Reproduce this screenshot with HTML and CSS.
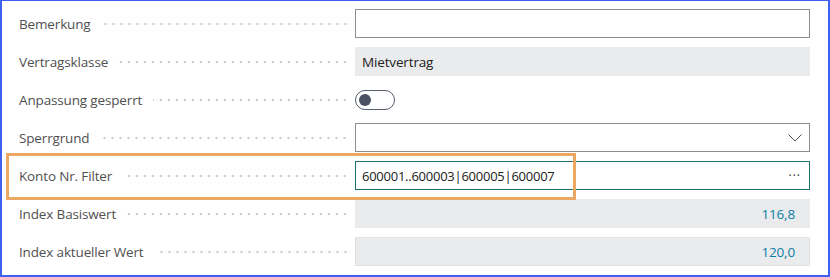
FILE: index.html
```html
<!DOCTYPE html>
<html lang="de">
<head>
<meta charset="utf-8">
<link rel="stylesheet" href="styles.css">
</head>
<body>
<div class="frame">
  <div class="form">
    <div class="row">
      <div class="label"><span>Bemerkung</span><span class="dots"></span></div>
      <div class="box input"></div>
    </div>
    <div class="row">
      <div class="label"><span>Vertragsklasse</span><span class="dots"></span></div>
      <div class="box readonly">Mietvertrag</div>
    </div>
    <div class="row">
      <div class="label"><span>Anpassung gesperrt</span><span class="dots"></span></div>
      <div class="toggle-cell"><span class="toggle"><span class="knob"></span></span></div>
    </div>
    <div class="row">
      <div class="label"><span>Sperrgrund</span><span class="dots"></span></div>
      <div class="box input select">
        <svg class="chev" width="14" height="8" viewBox="0 0 14 8"><path d="M0.5 0.5 L7 7 L13.5 0.5" fill="none" stroke="#505050" stroke-width="1"/></svg>
      </div>
    </div>
    <div class="row">
      <div class="label"><span>Konto Nr. Filter</span><span class="dots"></span></div>
      <div class="box input focus"><span class="val">600001..600003|600005|600007</span><span class="ell">···</span></div>
    </div>
    <div class="row">
      <div class="label"><span>Index Basiswert</span><span class="dots"></span></div>
      <div class="box readonly num">116,8</div>
    </div>
    <div class="row">
      <div class="label"><span>Index aktueller Wert</span><span class="dots"></span></div>
      <div class="box readonly num dotted">120,0</div>
    </div>
    <div class="row">
      <div class="label"><span></span><span class="dots"></span></div>
      <div class="box readonly dotted"></div>
    </div>
  </div>
  <div class="highlight"></div>
</div>
</body>
</html>
```

FILE: styles.css
```css
html, body {
  margin: 0;
  padding: 0;
  background: #ffffff;
}
body {
  font-family: "Open Sans", "Noto Sans", sans-serif;
  font-size: 13.5px;
  letter-spacing: -0.15px;
}
.frame {
  position: relative;
  width: 830px;
  height: 277px;
  box-sizing: border-box;
  border: 2px solid #3f5ff0;
  border-top-width: 1px;
  overflow: hidden;
}
.form {
  display: flex;
  flex-direction: column;
  gap: 9px;
  padding: 8px 18px 0 17px;
}
.row {
  display: grid;
  grid-template-columns: 336px 455px;
  height: 29px;
  flex: none;
}
.label {
  display: flex;
  align-items: center;
  color: #505050;
  padding-right: 6px;
  white-space: nowrap;
}
.dots {
  flex: 1;
  height: 2px;
  margin-left: 11px;
  background-image: radial-gradient(circle, #c9c9c9 0.9px, transparent 1.1px);
  background-size: 8px 2px;
  background-repeat: repeat-x;
  background-position: right center;
}
.box {
  box-sizing: border-box;
  height: 29px;
  display: flex;
  align-items: center;
  padding: 0 6px;
  color: #212121;
}
.input {
  border: 1px solid #8a8e94;
  background: #fff;
}
.readonly {
  background: #eaebec;
  padding-left: 7px;
}
.num {
  justify-content: flex-end;
  color: #0b7ea6;
  padding-right: 15px;
}
.dotted {
  outline: 1px dotted #d6d8da;
  outline-offset: -1px;
}
.select {
  justify-content: flex-end;
  padding-right: 6px;
}
.chev {
  display: block;
  margin-right: 1px;
  margin-top: 1px;
}
.focus {
  border-color: #1d6f6c;
  justify-content: space-between;
  padding-right: 8px;
}
.val {
  font-size: 13px;
  letter-spacing: -0.25px;
}
.ell {
  color: #333;
  letter-spacing: 1px;
  font-size: 12px;
}
.toggle-cell {
  display: flex;
  align-items: center;
}
.toggle {
  box-sizing: border-box;
  width: 40px;
  height: 20px;
  border: 1px solid #555e6b;
  border-radius: 10px;
  display: flex;
  align-items: center;
  padding-left: 3px;
}
.knob {
  width: 12px;
  height: 12px;
  border-radius: 50%;
  background: #4a5263;
}
.highlight {
  position: absolute;
  left: 4px;
  top: 152px;
  width: 570px;
  height: 47px;
  box-sizing: border-box;
  border: 3px solid #eaa862;
  pointer-events: none;
}
```
